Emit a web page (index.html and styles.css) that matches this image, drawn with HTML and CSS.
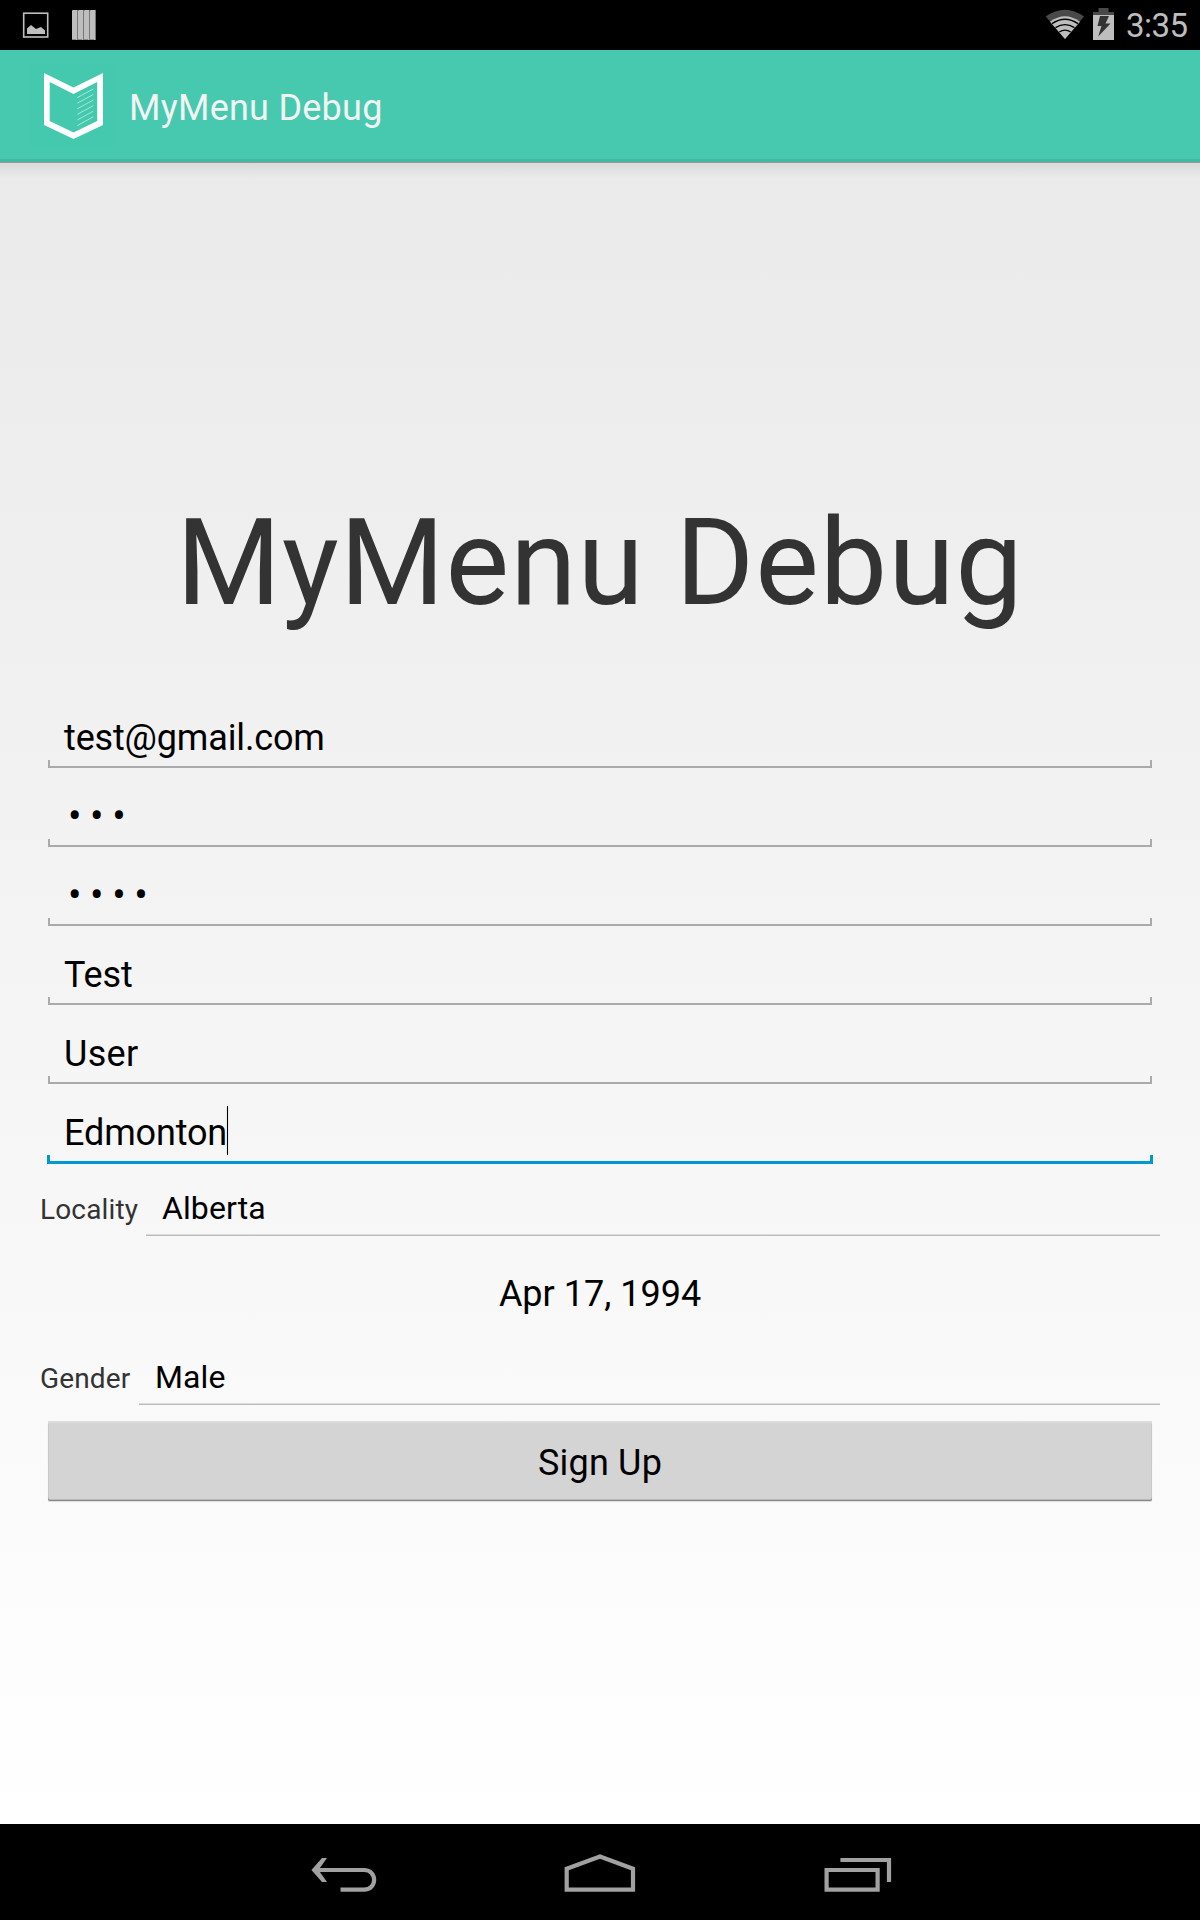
FILE: index.html
```
<!DOCTYPE html>
<html lang="en">
<head>
<meta charset="utf-8">
<title>MyMenu Debug</title>
<link rel="stylesheet" href="styles.css">
</head>
<body>
<div class="screen">
  <header class="status-bar">
    <svg class="status-left" width="100" height="50" viewBox="0 0 100 50">
      <rect x="23.7" y="13.2" width="24" height="23.8" fill="none" stroke="#bebebe" stroke-width="1.6"/>
      <path d="M27 34V28.500L31 25L36 29L41 27L45 30.500V34Z" fill="#bebebe"/>
      <path d="M72 10.500L73 10H77V40H72ZM78 10.500L79 10H83V40H78ZM84 10.500L85 10H89V40H84ZM90 10.500L91 10H95V40H90Z" fill="#bebebe"/>
      <path d="M77.500 10V40M83.500 10V40M89.500 10V40M95.500 10V40" stroke="#777"/>
      <path d="M72 39.500H76M78 39.500H82M84 39.500H88M90 39.500H94" stroke="#888"/>
    </svg>
    <div class="status-right">
      <svg width="80" height="50" viewBox="1040 0 80 50">
        <path d="M1045.700 16.500Q1065 3 1084 16.500L1065 39Z" fill="#494949"/>
        <path d="M1050 21.800Q1065 10.800 1080 21.800L1065 39Z" fill="#bebebe"/>
        <path d="M1052 23.600Q1065 14.800 1078 23.600M1055.500 27.700Q1065 21.600 1074.500 27.700M1059.300 32Q1065 28.300 1070.700 32" fill="none" stroke="#000" stroke-width="1.400"/>
        <path d="M1093 12H1098.500V8H1108.500V12H1114V15H1093Z" fill="#494949"/>
        <rect x="1093" y="15" width="21" height="25" fill="#bebebe"/>
        <path d="M1100 16H1109L1105.500 23.500H1110.500L1098.200 36.500L1101.500 26H1097.500Z" fill="#333"/>
      </svg>
      <span class="clock">3:35</span>
    </div>
  </header>
  <div class="action-bar">
    <svg class="logo" width="84" height="84" viewBox="31 64 84 84">
      <rect x="31" y="64" width="84" height="84" fill="#44c8ae"/>
      <path fill="#fff" fill-rule="evenodd" d="M44 73L73.500 87.500L103 73V125L73.500 139L44 125ZM49.700 82V121L73.500 132.500L97.200 121V82L73.500 94Z"/>
      <path d="M77.300 97.600L93.300 89M77.300 103.200L93.300 94.500M77.300 108.800L93.300 100M77.300 114.400L93.300 105.700M77.300 120L93.300 111.200M77.300 125.600L93.300 116.800" stroke="#a9e5d9" stroke-width="1"/>
    </svg>
    <span class="app-title">MyMenu Debug</span>
  </div>
  <main class="content">
    <h1 class="heading">MyMenu Debug</h1>
    <form class="form">
      <div class="field"><span class="value email">test@gmail.com</span></div>
      <div class="field"><span class="value dots">•••</span></div>
      <div class="field"><span class="value dots">••••</span></div>
      <div class="field"><span class="value">Test</span></div>
      <div class="field"><span class="value user">User</span></div>
      <div class="field focused"><span class="value">Edmonton</span><i class="caret"></i></div>
      <div class="spinner-row">
        <span class="label locality">Locality</span>
        <span class="spinner">Alberta</span>
      </div>
      <div class="date"><span>Apr 17, 1994</span></div>
      <div class="spinner-row">
        <span class="label gender">Gender</span>
        <span class="spinner">Male</span>
      </div>
      <button class="sign-up" type="button">Sign Up</button>
    </form>
  </main>
  <nav class="nav-bar">
    <svg width="96" height="96" viewBox="296 1824 96 96">
      <path d="M314 1870H364C377.500 1870 377.500 1889.700 364 1889.700H340.500" fill="none" stroke="#a1a1a1" stroke-width="4.200"/>
      <path d="M322 1858H327L318.500 1870L327 1882H322L311.400 1870Z" fill="#a1a1a1"/>
    </svg>
    <svg width="96" height="96" viewBox="552 1824 96 96">
      <path d="M566.700 1868.700L600 1856.500L633 1868.700V1889.700H566.700Z" fill="none" stroke="#a1a1a1" stroke-width="4.200"/>
    </svg>
    <svg width="96" height="96" viewBox="808 1824 96 96">
      <path d="M826.600 1870H877.600V1889.700H826.600ZM840.400 1860H889V1882" fill="none" stroke="#a1a1a1" stroke-width="4.200"/>
    </svg>
  </nav>
</div>
</body>
</html>
```
FILE: styles.css
```
* {
  box-sizing: border-box;
}

body {
  margin: 0;
  font-family: Roboto, "Liberation Sans", sans-serif;
  color: #000;
}

svg {
  display: block;
}

.screen {
  width: 1200px;
  height: 1920px;
  display: flex;
  flex-direction: column;
  overflow: hidden;
}

.status-bar {
  height: 50px;
  flex: none;
  display: flex;
  justify-content: space-between;
  background: #000;
}

.status-right {
  display: flex;
}

.clock {
  width: 80px;
  padding-left: 6px;
  font-size: 33px;
  line-height: 52px;
  letter-spacing: -0.5px;
  color: #bebebe;
}

.action-bar {
  height: 112px;
  flex: none;
  display: flex;
  padding: 14px 0 0 31px;
  background: #47c9af;
  border-bottom: 3px solid #42b8a1;
}

.app-title {
  margin-left: 14px;
  font-size: 36px;
  line-height: 89px;
  letter-spacing: 0.25px;
  color: #f3f3f3;
}

.content {
  flex: 1;
  padding: 0 40px;
  background:
    linear-gradient(rgba(0, 0, 0, 0.3), rgba(0, 0, 0, 0.3)) 0 0 / 100% 1px no-repeat,
    linear-gradient(rgba(0, 0, 0, 0.07), rgba(0, 0, 0, 0)) 0 0 / 100% 16px no-repeat,
    linear-gradient(#eaeaea, #fff);
}

.heading {
  margin: 0;
  padding-top: 318px;
  height: 527px;
  font-size: 120px;
  font-weight: 400;
  line-height: 166px;
  text-align: center;
  white-space: nowrap;
  letter-spacing: 1px;
  color: #333;
}

.form {
  display: flex;
  flex-direction: column;
}

.field {
  height: 79px;
  margin: 0 8px;
  padding: 25px 16px 0;
  display: flex;
  font-size: 36px;
  line-height: 48px;
  letter-spacing: -0.15px;
  background:
    linear-gradient(#aaa, #aaa) 0 100% / 100% 2px no-repeat,
    linear-gradient(#aaa, #aaa) 0 100% / 2px 8px no-repeat,
    linear-gradient(#aaa, #aaa) 100% 100% / 2px 8px no-repeat;
}

.field.focused {
  height: 80px;
  margin: 0 7px;
  padding-left: 17px;
  background:
    linear-gradient(#0099cc, #0099cc) 0 100% / 100% 3px no-repeat,
    linear-gradient(#0099cc, #0099cc) 0 100% / 3px 9px no-repeat,
    linear-gradient(#0099cc, #0099cc) 100% 100% / 3px 9px no-repeat;
}

.user {
  letter-spacing: 0.3px;
}

.dots {
  padding-left: 4px;
  font-size: 40px;
  line-height: 47px;
  letter-spacing: 8.6px;
}

.caret {
  width: 1px;
  height: 49px;
  margin-top: -3px;
  background: #000;
  box-shadow: 0 0 2px rgba(0, 0, 0, 0.2);
}

.spinner-row {
  height: 72px;
  display: flex;
}

.label {
  flex: none;
  font-size: 28px;
  line-height: 92px;
  letter-spacing: 0.15px;
  color: #333;
}

.locality {
  width: 106px;
}

.gender {
  width: 99px;
}

.spinner {
  flex: 1;
  padding-left: 16px;
  font-size: 32px;
  line-height: 88px;
  letter-spacing: 0.1px;
  background:
    linear-gradient(#bbb, #bbb) 0 100% / 100% 1px no-repeat,
    linear-gradient(#ddd, #ddd) 0 100% / 100% 2px no-repeat;
}

.date {
  height: 97px;
  font-size: 36px;
  line-height: 116px;
  text-align: center;
}

.sign-up {
  height: 80px;
  margin: 16px 8px 0;
  padding: 4px 0 0;
  font: 36px/76px Roboto, "Liberation Sans", sans-serif;
  letter-spacing: 0.2px;
  color: #000;
  background: #d4d4d4;
  border: 0;
  border-radius: 2px;
  box-shadow: inset 0 -1px #888, inset 0 -2px #b8b8b8, inset 0 2px #dcdcdc, inset 1px 0 #c8c8c8, inset -1px 0 #c8c8c8, 0 1px 1px #ddd;
}

.nav-bar {
  height: 96px;
  flex: none;
  display: flex;
  justify-content: center;
  gap: 160px;
  background: #000;
}
```
